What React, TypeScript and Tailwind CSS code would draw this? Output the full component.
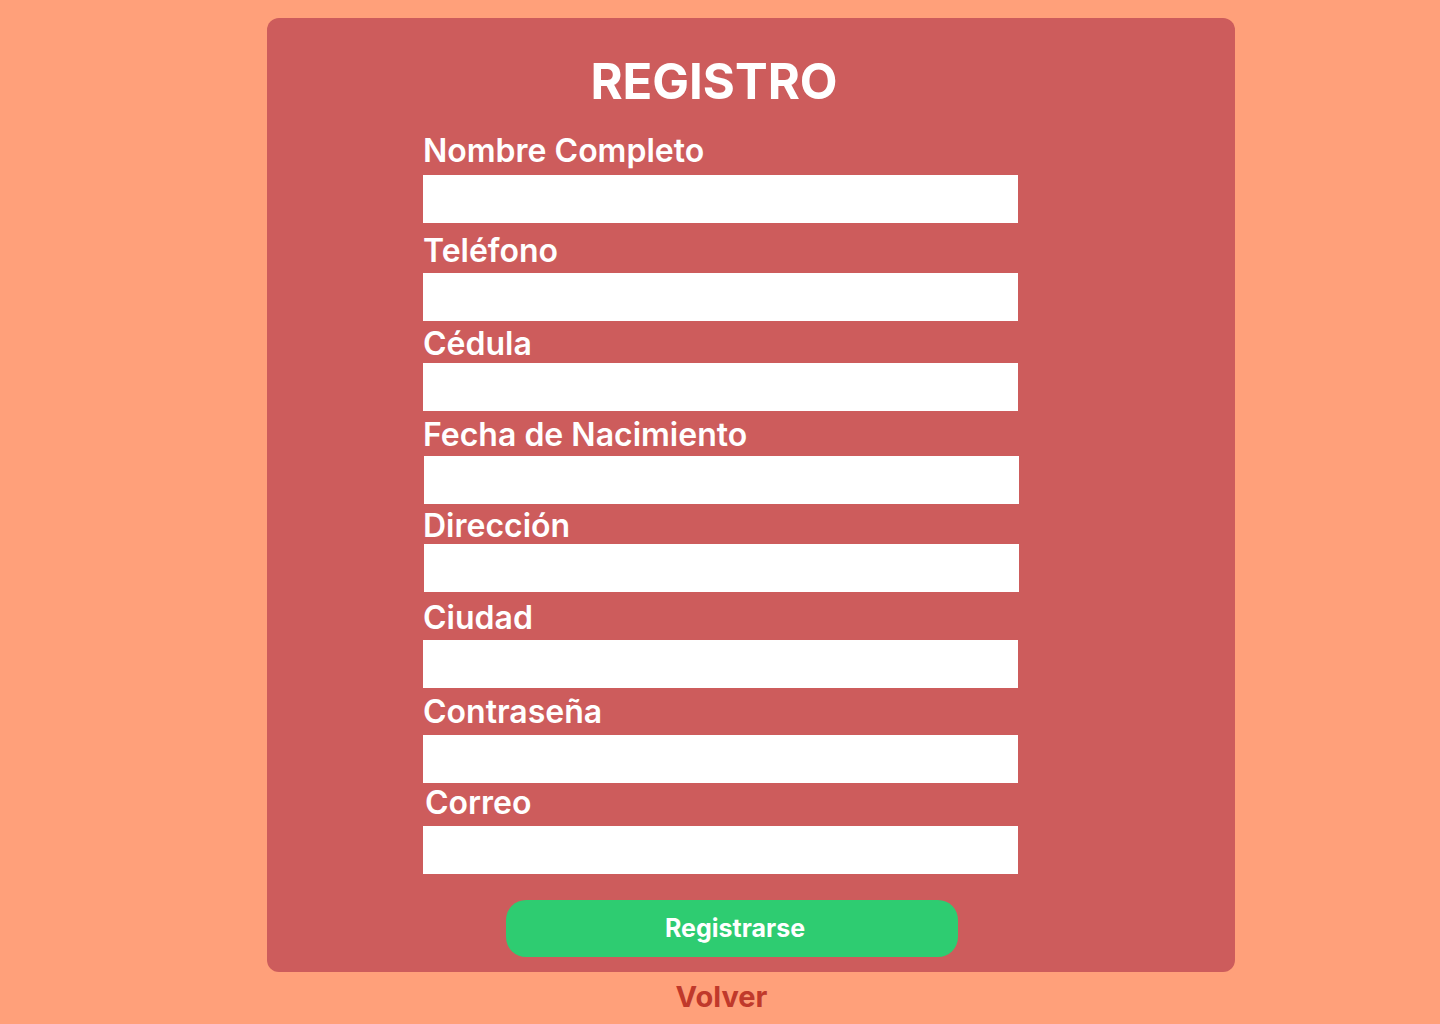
const fields = [
  { label: 'Nombre Completo', mt: 'mt-[27px]', gap: 'mt-[6px]', shift: '' },
  { label: 'Teléfono', mt: 'mt-[10px]', gap: 'mt-[4px]', shift: '' },
  { label: 'Cédula', mt: 'mt-[5px]', gap: 'mt-[1px]', shift: '' },
  { label: 'Fecha de Nacimiento', mt: 'mt-[6px]', gap: 'mt-[3px]', shift: 'ml-px' },
  { label: 'Dirección', mt: 'mt-[4px]', gap: 'mt-0', shift: 'ml-px' },
  { label: 'Ciudad', mt: 'mt-[8px]', gap: 'mt-[4px]', shift: '' },
  { label: 'Contraseña', mt: 'mt-[6px]', gap: 'mt-[5px]', shift: '' },
  { label: 'Correo', mt: 'mt-[2px]', gap: 'mt-[5px]', shift: '' },
]

export default function App() {
  return (
    <div className="min-h-[1024px] w-full bg-[#FFA07A] pt-[18px] font-['Inter',sans-serif]">
      <div className="ml-[267px] h-[954px] w-[968px] rounded-xl bg-[#CD5C5C] pt-[40px]">
        <h1 className="ml-[156px] w-[582px] text-center text-[49px] leading-[48px] font-bold text-white">
          REGISTRO
        </h1>

        {fields.map((f) => (
          <div key={f.label} className={`${f.mt} ml-[156px]`}>
            <label className={`block text-[32px] leading-[36px] font-semibold text-white ${f.label === 'Correo' ? 'ml-[2px]' : ''}`}>
              {f.label}
            </label>
            <input
              type={f.label === 'Contraseña' ? 'password' : 'text'}
              className={`${f.gap} ${f.shift} block h-[48px] w-[595px] bg-white outline-none`}
            />
          </div>
        ))}

        <button className="mt-[26px] ml-[239px] h-[57px] w-[452px] rounded-[20px] bg-[#2ECC71] pl-[6px] text-[25px] font-bold text-white">
          Registrarse
        </button>
      </div>

      <div className="mt-[11px] ml-[423px] w-[597px] text-center text-[29px] leading-[28px] font-bold text-[#C0392B]">
        Volver
      </div>
    </div>
  )
}
